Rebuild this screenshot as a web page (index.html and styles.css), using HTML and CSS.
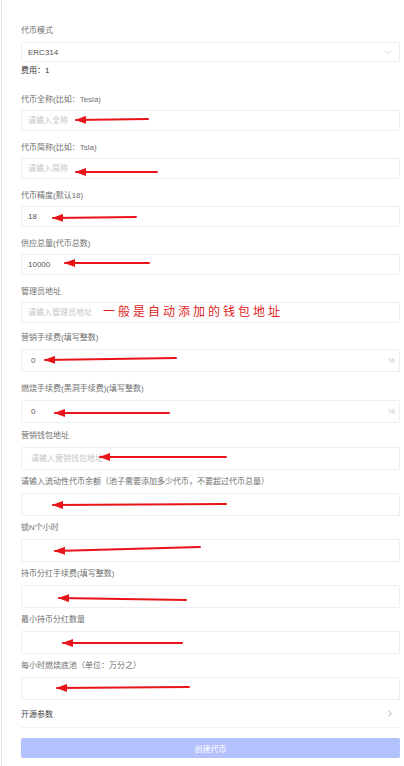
FILE: index.html
```html
<!DOCTYPE html>
<html lang="zh-CN">
<head>
  <meta charset="UTF-8">
  <meta name="viewport" content="width=device-width, initial-scale=1.0">
  <title>创建代币</title>
  <link rel="stylesheet" href="styles.css">
</head>
<body>
  <div class="page">
    <div class="section section-top">
      <div class="field-label">代币模式</div>
      <div class="box select-box">
        <span class="select-value">ERC314</span>
        <svg class="chevron-down" width="7" height="5" viewBox="0 0 7 5"><path d="M0.5 0.8 L3.5 3.8 L6.5 0.8" fill="none" stroke="#c8c9cc" stroke-width="0.8"/></svg>
      </div>
      <div class="fee">费用：1</div>
    </div>

    <div class="section section-basic">
      <div class="field">
        <label class="field-label" for="name">代币全称(比如：Tesla)</label>
        <div class="box"><input id="name" type="text" placeholder="请输入全称"></div>
      </div>
      <div class="field">
        <label class="field-label" for="symbol">代币简称(比如：Tsla)</label>
        <div class="box"><input id="symbol" type="text" placeholder="请输入简称"></div>
      </div>
      <div class="field">
        <label class="field-label" for="decimals">代币精度(默认18)</label>
        <div class="box"><input id="decimals" type="text" value="18"></div>
      </div>
      <div class="field">
        <label class="field-label" for="supply">供应总量(代币总数)</label>
        <div class="box"><input id="supply" type="text" value="10000"></div>
      </div>
      <div class="field">
        <label class="field-label" for="owner">管理员地址</label>
        <div class="box"><input id="owner" type="text" placeholder="请输入管理员地址"></div>
      </div>
    </div>

    <div class="section section-fee">
      <div class="field">
        <label class="field-label" for="marketFee">营销手续费(填写整数)</label>
        <div class="box"><input id="marketFee" type="text" value="0"><span class="suffix">%</span></div>
      </div>
      <div class="field">
        <label class="field-label" for="burnFee">燃烧手续费(黑洞手续费)(填写整数)</label>
        <div class="box"><input id="burnFee" type="text" value="0"><span class="suffix">%</span></div>
      </div>
    </div>

    <div class="section section-extra">
      <div class="field">
        <label class="field-label" for="marketWallet">营销钱包地址</label>
        <div class="box"><input id="marketWallet" type="text" placeholder="请输入营销钱包地址"></div>
      </div>
      <div class="field">
        <label class="field-label" for="liquidity">请输入流动性代币余额（池子需要添加多少代币，不要超过代币总量）</label>
        <div class="box"><input id="liquidity" type="text"></div>
      </div>
      <div class="field">
        <label class="field-label" for="lockHours">锁N个小时</label>
        <div class="box"><input id="lockHours" type="text"></div>
      </div>
      <div class="field">
        <label class="field-label" for="holderFee">持币分红手续费(填写整数)</label>
        <div class="box"><input id="holderFee" type="text"></div>
      </div>
      <div class="field">
        <label class="field-label" for="minHold">最小持币分红数量</label>
        <div class="box"><input id="minHold" type="text"></div>
      </div>
      <div class="field">
        <label class="field-label" for="burnPool">每小时燃烧底池（单位：万分之）</label>
        <div class="box"><input id="burnPool" type="text"></div>
      </div>
    </div>

    <div class="cell">
      <span>开源参数</span>
      <svg class="chevron-right" width="4" height="7" viewBox="0 0 4 7"><path d="M0.6 0.6 L3.2 3.5 L0.6 6.4" fill="none" stroke="#969799" stroke-width="0.8"/></svg>
    </div>

    <button class="submit" type="button">创建代币</button>

    <!-- annotations drawn over the form -->
    <div class="note">一般是自动添加的钱包地址</div>
    <svg class="arrows" width="404" height="766" viewBox="0 0 404 766">
      <defs>
        <marker id="head" markerUnits="userSpaceOnUse" markerWidth="11" markerHeight="8" refX="10" refY="4" orient="auto">
          <path d="M0 0 L11 4 L0 8 Z" fill="#e8141a"/>
        </marker>
      </defs>
      <g stroke="#e8141a" stroke-width="2" stroke-linecap="round" marker-end="url(#head)">
        <line x1="148" y1="119" x2="76" y2="120"/>
        <line x1="157" y1="172" x2="76" y2="172"/>
        <line x1="136" y1="217" x2="53" y2="218"/>
        <line x1="149" y1="263" x2="65" y2="263"/>
        <line x1="176" y1="358" x2="45" y2="360"/>
        <line x1="169" y1="413" x2="55" y2="413"/>
        <line x1="226" y1="457" x2="100" y2="457"/>
        <line x1="226" y1="504" x2="53" y2="505"/>
        <line x1="200" y1="547" x2="55" y2="551"/>
        <line x1="186" y1="600" x2="59" y2="598"/>
        <line x1="182" y1="643" x2="63" y2="643"/>
        <line x1="189" y1="687" x2="57" y2="688"/>
      </g>
    </svg>
  </div>
</body>
</html>
```

FILE: styles.css
```css
* {
  box-sizing: border-box;
}

body {
  margin: 0;
  background: #ffffff;
  font-family: "Liberation Sans", "Noto Sans CJK SC", sans-serif;
  color: #666;
}

.page {
  position: relative;
  min-height: 766px;
  margin-left: 1px;
  border-left: 1px solid #e8e8e8;
  padding: 25px 4px 0 19px;
}

.section {
  display: flex;
  flex-direction: column;
}

.field {
  display: flex;
  flex-direction: column;
}

.field-label {
  display: block;
  font-size: 8px;
  line-height: 12px;
  color: #707070;
  white-space: nowrap;
}

.box {
  display: flex;
  align-items: center;
  height: 21px;
  margin-top: 4px;
  padding: 0 7px 0 6px;
  border: 1px solid #eceef1;
  border-radius: 2px;
  background: #fff;
}

.box input {
  flex: 1;
  min-width: 0;
  height: 100%;
  padding: 0;
  border: 0;
  outline: 0;
  background: transparent;
  font-family: inherit;
  font-size: 8px;
  color: #555;
}

.box input::placeholder {
  color: #c3c5c8;
}

/* top: token mode + fee */
.select-box {
  height: 20px;
  margin-top: 5px;
}

.select-value {
  flex: 1;
  font-size: 8px;
  color: #555;
}

.chevron-down {
  display: block;
}

.fee {
  margin-top: 3px;
  font-size: 8px;
  line-height: 12px;
  color: #333;
}

.section-basic {
  margin-top: 17px;
  gap: 11px;
}

.section-fee {
  margin-top: 9px;
  gap: 11px;
}

.section-fee .box {
  height: 23px;
  margin-top: 5px;
  padding: 0 4px 0 9px;
}

.suffix {
  font-size: 8px;
  color: #c8c9cc;
}

.section-extra {
  margin-top: 7px;
  gap: 6px;
}

.section-extra .box {
  height: 23px;
  margin-top: 5px;
  padding: 0 9px;
}

.cell {
  display: flex;
  align-items: center;
  justify-content: space-between;
  height: 28px;
  padding-right: 8px;
  border-bottom: 1px solid #f0f1f3;
  font-size: 8px;
  color: #444;
}

.submit {
  display: block;
  width: 100%;
  height: 20px;
  margin-top: 10px;
  border: 0;
  border-radius: 2px;
  background: #b3c1fc;
  color: #fff;
  font-family: inherit;
  font-size: 8px;
}

.note {
  position: absolute;
  left: 101px;
  top: 304px;
  font-size: 12px;
  line-height: 16px;
  letter-spacing: 3px;
  color: #e02424;
  white-space: nowrap;
}

.arrows {
  position: absolute;
  left: -2px;
  top: 0;
  pointer-events: none;
}
```
